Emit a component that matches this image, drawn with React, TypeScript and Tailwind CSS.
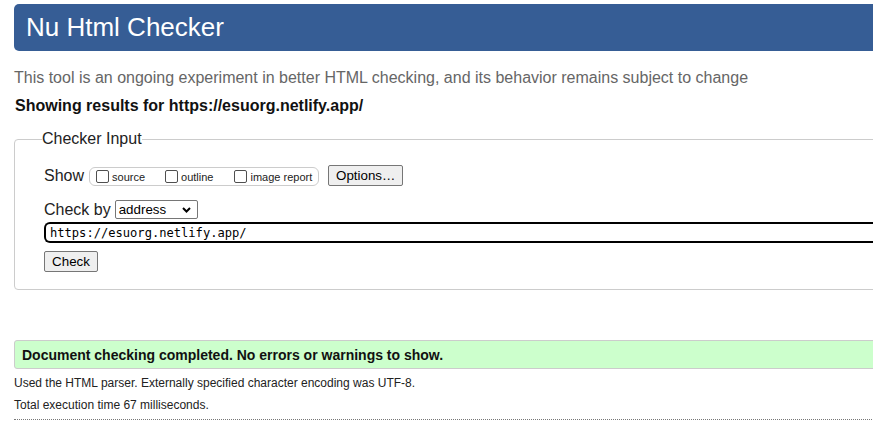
import React from "react";

const sans = "font-['Liberation_Sans',Arial,sans-serif]";

function Box({ label }: { label: string }) {
  return (
    <span className="flex items-center">
      <span className="w-[13px] h-[13px] border border-[#4f4f4f] rounded-[2px] bg-white shrink-0" />
      <span className="ml-[3px] text-[11px] leading-[13px] pt-[3px] text-[#222]">{label}</span>
    </span>
  );
}

export default function App() {
  return (
    <div className={`w-[873px] h-[444px] overflow-hidden bg-white ${sans}`}>
      <div className="w-[1000px] pl-[14px]">
        {/* title bar */}
        <h1 className="mt-[4px] h-[47px] bg-[#365d95] rounded-[5px] pl-[12px] flex items-center text-[26px] text-white leading-none pb-[2px]">
          Nu Html Checker
        </h1>

        <p className="mt-[18px] text-[16px] leading-[18px] text-[#666]">
          This tool is an ongoing experiment in better HTML checking, and its behavior remains subject to change
        </p>
        <p className="mt-[10px] text-[16px] leading-[18px] font-bold text-[#111] pl-[1px]">
          Showing results for https://esuorg.netlify.app/
        </p>

        <fieldset className="mt-[15px] border border-[#ccc] rounded-[4px] pl-[29px] pb-[17px] text-[#222]">
          <legend className="ml-[-2px] px-0 text-[16px] leading-[18px] text-[#222]">Checker Input</legend>

          <div className="mt-[17px] flex items-center h-[21px]">
            <span className="text-[16px] leading-[18px]">Show</span>
            <div className="ml-[5px] h-[19px] w-[230px] border border-[#ccc] rounded-[6px] flex items-center pl-[6px] mt-[1px]">
              <Box label="source" />
              <span className="w-[20px]" />
              <Box label="outline" />
              <span className="w-[21px]" />
              <Box label="image report" />
            </div>
            <button className="ml-[9px] h-[21px] px-[7px] border border-[#767676] rounded-[2px] bg-[#efefef] text-[13.33px] leading-none text-black">
              Options…
            </button>
          </div>

          <div className="mt-[14px] flex items-center h-[19px]">
            <span className="text-[16px] leading-[18px]">Check by</span>
            <div className="ml-[4px] w-[83px] h-[19px] border border-[#767676] rounded-[2px] bg-white flex items-center justify-between pl-[3px] pr-[6px]">
              <span className="text-[13.33px] leading-none text-black">address</span>
              <svg width="9" height="6" viewBox="0 0 9 6" fill="none">
                <path d="M1 1 L4.5 4.5 L8 1" stroke="#000" strokeWidth="2" />
              </svg>
            </div>
          </div>

          <div className="mt-[3px] h-[21px] border-2 border-black rounded-l-[6px] border-r-0 flex items-center pl-[4px] pt-[2px]">
            <span className="font-['DejaVu_Sans_Mono',monospace] text-[12.1px] leading-none text-black">
              https://esuorg.netlify.app/
            </span>
          </div>

          <button className="mt-[8px] block h-[21px] w-[54px] border border-[#767676] rounded-[2px] bg-[#efefef] text-[13.33px] leading-none text-black">
            Check
          </button>
        </fieldset>

        <div className="mt-[50px] h-[29px] bg-[#ccffcc] border border-[#ccc] rounded-[3px] flex items-center pl-[7px]">
          <strong className="text-[14px] leading-none text-[#111]">
            Document checking completed. No errors or warnings to show.
          </strong>
        </div>

        <p className="mt-[7px] text-[12px] leading-[14px] text-[#222]">
          Used the HTML parser. Externally specified character encoding was UTF-8.
        </p>
        <p className="mt-[8px] text-[12px] leading-[14px] text-[#222]">Total execution time 67 milliseconds.</p>
        <div className="mt-[7px] border-t border-dotted border-[#777]" />
      </div>
    </div>
  );
}
